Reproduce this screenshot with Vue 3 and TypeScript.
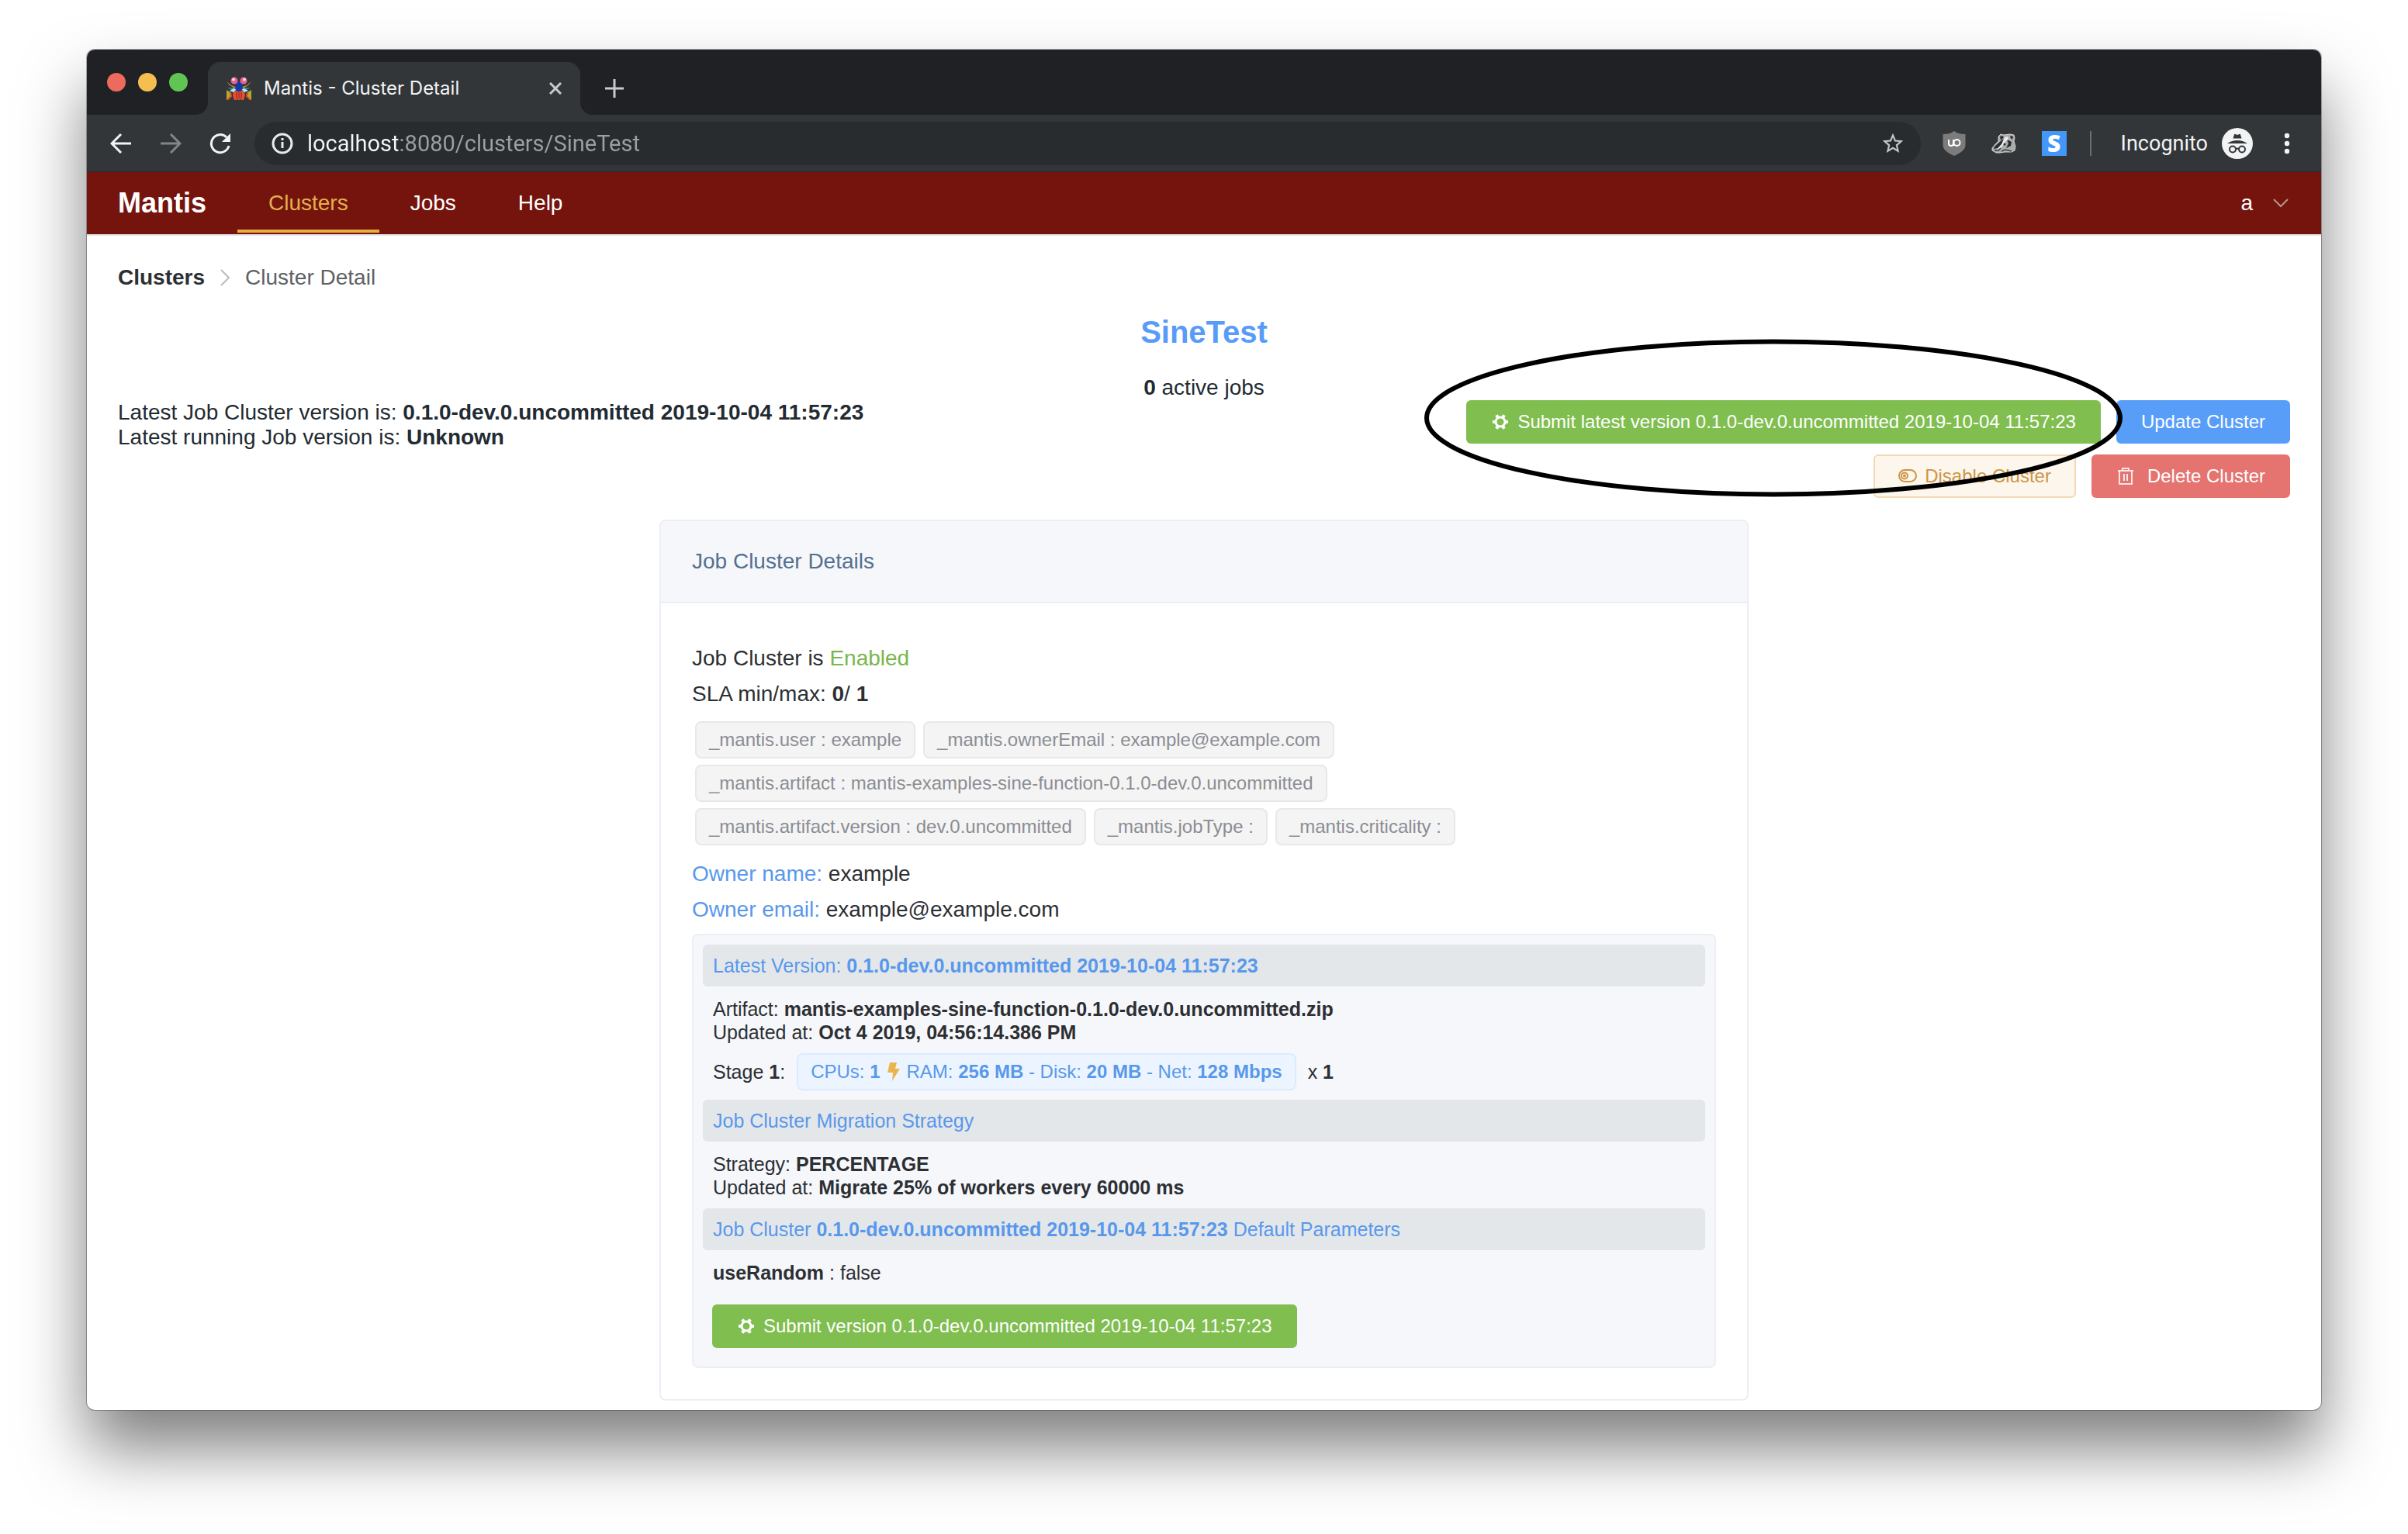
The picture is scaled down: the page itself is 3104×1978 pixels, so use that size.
<script setup lang="ts">
import { ref } from 'vue'

const url = ref('localhost:8080/clusters/SineTest')
const version = '0.1.0-dev.0.uncommitted 2019-10-04 11:57:23'

const navItems: { label: string; active: boolean }[] = [
  { label: 'Clusters', active: true },
  { label: 'Jobs', active: false },
  { label: 'Help', active: false },
]

const labels: string[] = [
  '_mantis.user : example',
  '_mantis.ownerEmail : example@example.com',
  '_mantis.artifact : mantis-examples-sine-function-0.1.0-dev.0.uncommitted',
  '_mantis.artifact.version : dev.0.uncommitted',
  '_mantis.jobType :',
  '_mantis.criticality :',
]

const gearAngles = [0, 60, 120, 180, 240, 300]
</script>

<template>
  <div class="desktop">
    <div class="window">
      <div class="tab-strip">
        <div class="lights">
          <button class="light red" aria-label="Close window"></button>
          <button class="light yellow" aria-label="Minimize window"></button>
          <button class="light green" aria-label="Zoom window"></button>
        </div>
        <div class="tab">
          <svg class="favicon" viewBox="0 0 32 30" aria-hidden="true">
            <path d="M0 6l4 5 7 4 1-2-6-2zM32 6l-4 5-7 4-1-2 6-2z" fill="#a89a2c" />
            <path d="M1 14l10 0 1 3-5 0zM31 14l-10 0-1 3 5 0z" fill="#2d7f95" />
            <path d="M0 17l5 3 1 5-5 5H0zM32 17l-5 3-1 5 5 5h1z" fill="#b5a82e" />
            <path d="M5 20l1 5-5 5M27 20l-1 5 5 5" fill="none" stroke="#d8502a" stroke-width="2" />
            <path d="M9 19l3-1h8l3 1 1 5-2 6h-3l-1-2-1 2h-2l-1-2-1 2h-3l-2-6z" fill="#e8502a" />
            <path d="M13 20v8M16 20v8M19 20v8" stroke="#7d2430" />
            <path d="M4 18l5-3 4 1-4 4zM28 18l-5-3-4 1 4 4z" fill="#b7e3ee" />
            <path d="M13 7h6l1 5 1 3-3 4h-4l-3-4 1-3z" fill="#1437ae" />
            <circle cx="10" cy="5" r="4.500" fill="#e8608f" />
            <circle cx="22" cy="5" r="4.500" fill="#e8608f" />
            <circle cx="9" cy="3.500" r="2" fill="#fad7e4" />
            <circle cx="23" cy="3.500" r="2" fill="#fad7e4" />
          </svg>
          <span class="tab-title">Mantis - Cluster Detail</span>
          <button class="icon-btn" aria-label="Close tab">
            <svg width="16" height="16" viewBox="0 0 16 16"><path d="M1 1l14 14M15 1L1 15" stroke="#c8cacc" stroke-width="3" /></svg>
          </button>
        </div>
        <button class="icon-btn new-tab" aria-label="New tab">
          <svg width="24" height="24" viewBox="0 0 24 24"><path d="M12 0v24M0 12h24" stroke="#c8cacc" stroke-width="3" /></svg>
        </button>
      </div>

      <div class="toolbar">
        <div class="history">
          <button class="icon-btn" aria-label="Back">
            <svg width="28" height="28" viewBox="0 0 28 28" fill="none" stroke="#f1f3f4" stroke-width="3"><path d="M27 14H3M14 2L2 14l12 12" /></svg>
          </button>
          <button class="icon-btn" aria-label="Forward">
            <svg width="28" height="28" viewBox="0 0 28 28" fill="none" stroke="#82868a" stroke-width="3"><path d="M1 14h24M14 2l12 12-12 12" /></svg>
          </button>
          <button class="icon-btn" aria-label="Reload">
            <svg width="28" height="28" viewBox="0 0 28 28">
              <path d="M25 17A11.500 11.500 0 1 1 22 6" fill="none" stroke="#f1f3f4" stroke-width="3" />
              <path d="M27 1v11H16z" fill="#f1f3f4" />
            </svg>
          </button>
        </div>
        <div class="address">
          <svg width="28" height="28" viewBox="0 0 28 28" aria-hidden="true">
            <circle cx="14" cy="14" r="12" fill="none" stroke="#e8eaed" stroke-width="3" />
            <path d="M14 12v8M14 7v3" stroke="#e8eaed" stroke-width="3" />
          </svg>
          <input v-model="url" class="url" type="text" aria-label="Address" />
          <button class="icon-btn" aria-label="Bookmark this page">
            <svg width="32" height="32" viewBox="0 0 24 24"><path d="M22 9.240l-7.190-.62L12 2 9.190 8.630 2 9.240l5.460 4.730L5.820 21 12 17.270 18.180 21l-1.630-7.030L22 9.240zM12 15.400l-3.760 2.270 1-4.280-3.320-2.880 4.380-.38L12 6.100l1.710 4.040 4.380.38-3.320 2.880 1 4.280L12 15.400z" fill="#c4c7c9" /></svg>
          </button>
        </div>
        <div class="extensions">
          <button class="icon-btn" aria-label="uBlock Origin">
            <svg width="30" height="32" viewBox="0 0 30 32">
              <path d="M15 0c4 3 9 4 14.500 4v14c0 6-6 10-14.500 14C6.500 28 .5 24 .5 18V4C6 4 11 3 15 0z" fill="#7c7c7c" />
              <path d="M8 11v5q0 3 3 3t3-3v-5M14 15v4" fill="none" stroke="#fff" stroke-width="2" />
              <circle cx="18.500" cy="15" r="4" fill="none" stroke="#fff" stroke-width="2" />
            </svg>
          </button>
          <button class="icon-btn" aria-label="Privacy Badger">
            <svg width="32" height="26" viewBox="0 0 32 26">
              <path d="M1 19l4-5 4-4V4l3-3 4 1 8-1 5 1 1 4-1 4 2 7-1 5-4 2-9 0-6 1H6l-5-3z" fill="#a9abac" stroke="#d0d1d1" />
              <path d="M11 4l3-1 2 2-4 4zM25 3l3 1-1 4-3-3zM4 17l9-8 5-3-3 6-7 7-5 1zM20 8l6 3-1 5-6 3 3-6z" fill="#2a2c2d" />
              <path d="M17 5l4-1 1 3-4 4-6 8-5 2 6-7z" fill="#ececec" />
              <circle cx="17" cy="14" r="1.500" fill="#2a2c2d" />
              <path d="M4 22h5l3-3M13 23l5-2 8 2" fill="none" stroke="#3a3c3d" stroke-width="1.500" />
            </svg>
          </button>
          <button class="icon-btn s-ext" aria-label="Stylish">S</button>
        </div>
        <div class="profile">
          <span>Incognito</span>
          <svg width="40" height="40" viewBox="0 0 40 40" aria-hidden="true">
            <circle cx="20" cy="20" r="20" fill="#f1f3f4" />
            <path d="M14.500 13.500L16 8.500q.5-1 1.500-.5l2.500 1 2.500-1q1-.5 1.500.5l1.500 5zM7 20q6-4 13-4t13 4z" fill="#323639" />
            <g fill="none" stroke="#323639" stroke-width="2">
              <circle cx="14" cy="27.500" r="4" /><circle cx="26" cy="27.500" r="4" /><path d="M18 27q2-1 4 0" />
            </g>
          </svg>
          <button class="icon-btn menu" aria-label="Browser menu">
            <svg width="8" height="28" viewBox="0 0 8 28" fill="#f1f3f4"><circle cx="4" cy="4" r="3.200" /><circle cx="4" cy="14" r="3.200" /><circle cx="4" cy="24" r="3.200" /></svg>
          </button>
        </div>
      </div>

      <header class="app-bar">
        <a class="brand" href="#">Mantis</a>
        <nav class="nav">
          <a v-for="item in navItems" :key="item.label" href="#" :class="{ active: item.active }">{{ item.label }}</a>
        </nav>
        <button class="user">
          a
          <svg width="20" height="12" viewBox="0 0 20 12" fill="none" stroke="#b99491" stroke-width="2"><path d="M1 1l9 9 9-9" /></svg>
        </button>
      </header>

      <main class="page">
        <nav class="crumbs" aria-label="Breadcrumb">
          <a href="#">Clusters</a>
          <svg width="12" height="22" viewBox="0 0 12 22" fill="none" stroke="#b8bcc4" stroke-width="2"><path d="M1 1l10 10L1 21" /></svg>
          <span>Cluster Detail</span>
        </nav>

        <h1>SineTest</h1>
        <p class="active-jobs"><b>0</b> active jobs</p>

        <section class="summary">
          <div class="versions">
            <p>Latest Job Cluster version is: <b>{{ version }}</b></p>
            <p>Latest running Job version is: <b>Unknown</b></p>
          </div>
          <div class="actions">
            <div class="action-row">
              <div class="highlighted">
                <button class="btn success">
                  <svg class="gear" viewBox="0 0 24 24">
                    <circle cx="12" cy="12" r="6" />
                    <path v-for="a in gearAngles" :key="a" d="M18 12h4" :transform="`rotate(${a} 12 12)`" />
                  </svg>
                  <span>Submit latest version {{ version }}</span>
                </button>
                <svg class="ring" viewBox="0 0 900 204" aria-hidden="true"><ellipse cx="450" cy="102" rx="447" ry="98.500" /></svg>
              </div>
              <button class="btn primary">Update Cluster</button>
            </div>
            <div class="action-row">
              <button class="btn warning">
                <svg width="24" height="24" viewBox="0 0 24 24" fill="none" stroke="currentColor" stroke-width="2">
                  <rect x="1" y="4" width="22" height="15" rx="7.500" /><circle cx="8" cy="11.500" r="4" /><circle cx="8" cy="11.500" r="1" />
                </svg>
                <span>Disable Cluster</span>
              </button>
              <button class="btn danger">
                <svg width="24" height="24" viewBox="0 0 24 24" fill="none" stroke="#fbe6e5" stroke-width="2">
                  <path d="M2 5h20M8 5V2h8v3M4 5v17h16V5" /><path d="M10 9v9M14 9v9" />
                </svg>
                <span>Delete Cluster</span>
              </button>
            </div>
          </div>
        </section>

        <section class="card">
          <h2>Job Cluster Details</h2>
          <div class="card-body">
            <p class="line">Job Cluster is <span class="enabled">Enabled</span></p>
            <p class="line">SLA min/max: <b>0</b>/ <b>1</b></p>
            <ul class="tags">
              <li v-for="label in labels" :key="label">{{ label }}</li>
            </ul>
            <p class="line"><span class="key">Owner name:</span> example</p>
            <p class="line"><span class="key">Owner email:</span> example@example.com</p>

            <div class="panel">
              <h3>Latest Version: <b>{{ version }}</b></h3>
              <div class="group">
                <p>Artifact: <b>mantis-examples-sine-function-0.1.0-dev.0.uncommitted.zip</b></p>
                <p>Updated at: <b>Oct 4 2019, 04:56:14.386 PM</b></p>
              </div>
              <div class="stage">
                <span>Stage <b>1</b>:</span>
                <span class="resources">
                  <span>CPUs: <b>1</b></span>
                  <svg width="16" height="24" viewBox="0 0 16 24"><path d="M3 0h9l-2 8h6L6 24l1-11H0z" fill="#eab54c" /></svg>
                  <span>RAM: <b>256 MB</b> - Disk: <b>20 MB</b> - Net: <b>128 Mbps</b></span>
                </span>
                <span>x <b>1</b></span>
              </div>
              <h3>Job Cluster Migration Strategy</h3>
              <div class="group">
                <p>Strategy: <b>PERCENTAGE</b></p>
                <p>Updated at: <b>Migrate 25% of workers every 60000 ms</b></p>
              </div>
              <h3>Job Cluster <b>{{ version }}</b> Default Parameters</h3>
              <div class="group">
                <p><b>useRandom</b> : false</p>
              </div>
              <button class="btn success submit">
                <svg class="gear" viewBox="0 0 24 24">
                  <circle cx="12" cy="12" r="6" />
                  <path v-for="a in gearAngles" :key="a" d="M18 12h4" :transform="`rotate(${a} 12 12)`" />
                </svg>
                <span>Submit version {{ version }}</span>
              </button>
            </div>
          </div>
        </section>
      </main>
    </div>
  </div>
</template>

<style>
body {
  margin: 0;
  background: #fff;
}
</style>

<style scoped>
.desktop {
  padding: 64px 112px 160px;
  overflow: hidden;
  font-family: 'Liberation Sans', Arial, sans-serif;
  font-size: 28px;
  line-height: 32px;
  color: #2d2f33;
}
.desktop * {
  box-sizing: border-box;
}
p, h1, h2, h3, ul {
  margin: 0;
  padding: 0;
}
button {
  border: 0;
  padding: 0;
  background: none;
  font: inherit;
  color: inherit;
}
a {
  color: inherit;
  text-decoration: none;
}
svg {
  display: block;
  flex: none;
}
.window {
  border-radius: 10px;
  background: #fff;
  box-shadow: 0 0 0 1px rgba(0, 0, 0, 0.3), 0 50px 84px rgba(0, 0, 0, 0.5);
}

/* browser chrome */
.tab-strip {
  display: flex;
  align-items: flex-end;
  height: 84px;
  padding-left: 26px;
  border-radius: 10px 10px 0 0;
  background: #202124;
  font-family: Roboto, sans-serif;
}
.lights {
  display: flex;
  gap: 16px;
  margin: 0 26px 30px 0;
}
.light {
  width: 24px;
  height: 24px;
  border-radius: 50%;
}
.red { background: #ed6a5e; }
.yellow { background: #f5bf4f; }
.green { background: #61c554; }
.tab {
  position: relative;
  display: flex;
  align-items: center;
  width: 480px;
  height: 68px;
  padding: 0 24px;
  border-radius: 16px 16px 0 0;
  background: #323639;
}
.tab::before,
.tab::after {
  content: '';
  position: absolute;
  bottom: 0;
  width: 16px;
  height: 16px;
}
.tab::before {
  left: -16px;
  background: radial-gradient(circle at 0 0, #202124 16px, #323639 16px);
}
.tab::after {
  right: -16px;
  background: radial-gradient(circle at 100% 0, #202124 16px, #323639 16px);
}
.favicon {
  width: 32px;
  height: 30px;
}
.tab-title {
  flex: 1;
  padding-left: 16px;
  font-family: Inter, sans-serif;
  font-size: 24px;
  color: #f1f3f4;
}
.icon-btn {
  display: flex;
  align-items: center;
  justify-content: center;
}
.new-tab {
  margin: 0 0 22px 32px;
}
.toolbar {
  display: flex;
  align-items: center;
  height: 74px;
  padding: 0 40px 0 30px;
  border-bottom: 1px solid #24282a;
  background: #323639;
  font-family: Roboto, sans-serif;
}
.history {
  display: flex;
  gap: 36px;
  margin-right: 30px;
}
.address {
  display: flex;
  flex: 1;
  align-items: center;
  height: 56px;
  padding: 0 20px 0 22px;
  border-radius: 28px;
  background: #282c2f;
}
.url {
  flex: 1;
  min-width: 0;
  padding: 0 0 0 18px;
  border: 0;
  outline: 0;
  font: inherit;
  font-size: 29px;
  color: transparent;
  background: linear-gradient(90deg, #f4f5f6 136px, #9aa0a6 136px);
  background-clip: text;
  -webkit-background-clip: text;
}
.extensions {
  display: flex;
  align-items: center;
  gap: 33px;
  padding: 0 30px 0 28px;
}
.s-ext {
  width: 32px;
  height: 32px;
  background: #4297f8;
  font-family: 'Open Sans', sans-serif;
  font-size: 30px;
  font-weight: 800;
  line-height: 32px;
  color: #fff;
}
.profile {
  display: flex;
  align-items: center;
  gap: 18px;
  padding-left: 40px;
  font-size: 27px;
  color: #f1f3f4;
  background: linear-gradient(#6b6f72, #6b6f72) no-repeat 0 50% / 2px 32px;
}
.menu {
  margin-left: 22px;
}

/* application bar */
.app-bar {
  display: flex;
  align-items: center;
  height: 82px;
  padding: 0 40px;
  border-bottom: 2px solid #e6e6e6;
  background: #74140d;
  color: #fff;
}
.brand {
  width: 154px;
  font-size: 36px;
  font-weight: 700;
  line-height: 40px;
}
.nav {
  display: flex;
  flex: 1;
}
.nav a {
  height: 78px;
  margin-bottom: 2px;
  padding: 0 40px;
  border-bottom: 4px solid transparent;
  line-height: 80px;
}
.nav .active {
  border-color: #e6ae3f;
  color: #e3b04e;
}
.user {
  display: flex;
  align-items: center;
  gap: 26px;
  padding-right: 2px;
}

/* page */
.page {
  padding: 38px 40px 12px;
}
.crumbs {
  display: flex;
  align-items: center;
  gap: 20px;
  color: #5e6166;
}
.crumbs a {
  font-weight: 700;
  color: #2d2f33;
}
h1 {
  margin-top: 30px;
  font-size: 40px;
  line-height: 48px;
  text-align: center;
  color: #589cf8;
}
.active-jobs {
  margin-top: 32px;
  text-align: center;
  color: #222b32;
}
.summary {
  display: flex;
  justify-content: space-between;
  color: #222b32;
}
.action-row {
  display: flex;
  justify-content: flex-end;
  gap: 20px;
  margin-bottom: 14px;
}
.highlighted {
  position: relative;
}
.ring {
  position: absolute;
  z-index: 1;
  top: -79px;
  left: -54px;
  width: 900px;
  height: 204px;
  fill: none;
  stroke: #000;
  stroke-width: 6px;
  pointer-events: none;
}
.btn {
  display: flex;
  align-items: center;
  gap: 10px;
  height: 56px;
  padding: 0 32px;
  border-radius: 6px;
  font-size: 24px;
  white-space: nowrap;
  color: #fff;
}
.gear {
  width: 24px;
  height: 24px;
  fill: none;
  stroke: #fff;
  stroke-width: 4px;
}
.gear circle {
  stroke-width: 3px;
}
.success { background: #80be50; }
.primary { background: #589ef8; }
.warning {
  padding: 0 30px;
  border: 2px solid #f3dab3;
  background: #fdf6ec;
  color: #cc9548;
}
.danger {
  gap: 16px;
  background: #e57470;
}
.card {
  width: calc(50% + 4px);
  margin: 14px auto 0;
  border: 2px solid #ebeef5;
  border-radius: 8px;
}
h2 {
  padding: 36px 40px;
  border-bottom: 2px solid #ebeef5;
  border-radius: 6px 6px 0 0;
  background: #f5f7fb;
  font-size: 28px;
  font-weight: 400;
  color: #54708f;
}
.card-body {
  padding: 48px 40px 40px;
}
.line {
  line-height: 46px;
}
.enabled { color: #79b74b; }
.key { color: #5898ec; }
.tags {
  display: flex;
  flex-wrap: wrap;
  gap: 8px 10px;
  margin: 12px 4px 14px;
  list-style: none;
}
.tags li {
  height: 48px;
  padding: 0 16px;
  border: 2px solid #e7e8ea;
  border-radius: 8px;
  background: #f4f4f5;
  font-size: 24px;
  line-height: 44px;
  color: #8b8d92;
}
.panel {
  margin-top: 8px;
  padding: 12px 12px 24px;
  border: 2px solid #ebeef5;
  border-radius: 8px;
  background: #f5f7fb;
  font-size: 25px;
  line-height: 30px;
}
h3 {
  padding: 12px 13px;
  border-radius: 6px;
  background: #e4e7ea;
  font-size: 25px;
  font-weight: 400;
  color: #5898ec;
}
.group {
  padding: 14px 13px 12px;
}
.stage {
  display: flex;
  align-items: center;
  gap: 15px;
  padding: 0 13px 12px;
}
.resources {
  display: flex;
  align-items: center;
  gap: 9px;
  height: 48px;
  padding: 0 16px;
  border: 2px solid #d9ecff;
  border-radius: 8px;
  background: #ecf5ff;
  font-size: 24px;
  color: #5898ec;
}
.submit {
  margin: 14px 12px 0;
}
</style>
